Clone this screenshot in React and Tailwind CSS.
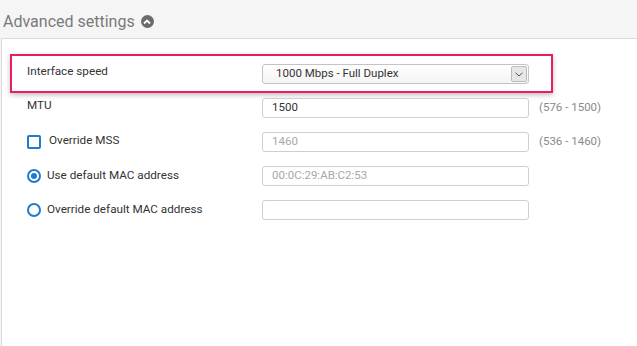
import React from "react";

function Input({ value, disabled }) {
  return (
    <div
      className={`w-[267px] h-[20px] border border-[#cfcfcf] rounded-[3px] bg-white flex items-center pl-[9px] text-[11.5px] ${
        disabled ? "text-[#a8a8a8]" : "text-[#333]"
      }`}
    >
      {value}
    </div>
  );
}

function Range({ children }) {
  return <span className="ml-[10px] text-[11.5px] text-[#8a8a8a]">{children}</span>;
}

export default function App() {
  return (
    <div
      className="w-[637px] h-[346px] bg-[#f5f5f5] flex flex-col overflow-hidden"
      style={{ fontFamily: "Roboto, 'Noto Sans', sans-serif" }}
    >
      <div className="h-[38px] flex items-center pl-[3px] gap-[6px] pt-[5px]">
        <span className="text-[16px] text-[#7a7a7a] leading-none">Advanced settings</span>
        <span className="w-[13px] h-[13px] rounded-full bg-[#6b6b6b] flex items-center justify-center">
          <svg width="8" height="6" viewBox="0 0 8 6">
            <path d="M1 4.5 L4 1.5 L7 4.5" fill="none" stroke="white" strokeWidth="1.8" />
          </svg>
        </span>
      </div>
      <div className="flex-1 ml-[1px] bg-white border-l border-t border-[#dadada]">
        <div className="mt-[15px] ml-[8px] w-[543px] h-[39px] border-2 border-[#ea1d5d] shadow-[0_2px_5px_rgba(0,0,0,0.25)] flex items-start pl-[15px] pt-[8px]">
          <span className="w-[235px] text-[11.7px] text-[#333] leading-[14px]">Interface speed</span>
          <div className="w-[267px] h-[20px] border border-[#c4c4c4] rounded-[3px] bg-gradient-to-b from-white to-[#f4f4f4] flex items-center pl-[13px] pr-[1px] text-[11.5px] text-[#333]">
            <span className="flex-1">1000 Mbps - Full Duplex</span>
            <span className="w-[16px] h-[16px] bg-[#e6e6e6] border border-[#bdbdbd] rounded-[2px] flex items-center justify-center">
              <svg width="8" height="5" viewBox="0 0 8 5">
                <path d="M0.5 0.8 L4 4 L7.5 0.8" fill="none" stroke="#555" strokeWidth="1" />
              </svg>
            </span>
          </div>
        </div>
        <div className="mt-[5px] pl-[25px] flex flex-col gap-[14px]">
          <div className="flex items-center h-[20px]">
            <span className="w-[235px] text-[11.7px] text-[#333] -mt-[5px]">MTU</span>
            <Input value="1500" />
            <Range>(576 - 1500)</Range>
          </div>
          <div className="flex items-center h-[20px]">
            <div className="w-[235px] flex items-center">
              <span className="w-[14px] h-[14px] border-2 border-[#1f7bd0] rounded-[2px] mr-[8px]"></span>
              <span className="text-[11.7px] text-[#333] -mt-[2px]">Override MSS</span>
            </div>
            <Input value="1460" disabled />
            <Range>(536 - 1460)</Range>
          </div>
          <div className="flex items-center h-[20px]">
            <div className="w-[235px] flex items-center">
              <span className="w-[14px] h-[14px] border-2 border-[#1f7bd0] rounded-full mr-[6px] flex items-center justify-center">
                <span className="w-[6px] h-[6px] rounded-full bg-[#1f7bd0]"></span>
              </span>
              <span className="text-[11.7px] text-[#333]">Use default MAC address</span>
            </div>
            <Input value="00:0C:29:AB:C2:53" disabled />
          </div>
          <div className="flex items-center h-[20px]">
            <div className="w-[235px] flex items-center">
              <span className="w-[14px] h-[14px] border-2 border-[#1f7bd0] rounded-full mr-[6px]"></span>
              <span className="text-[11.7px] text-[#333]">Override default MAC address</span>
            </div>
            <Input value="" />
          </div>
        </div>
      </div>
    </div>
  );
}
